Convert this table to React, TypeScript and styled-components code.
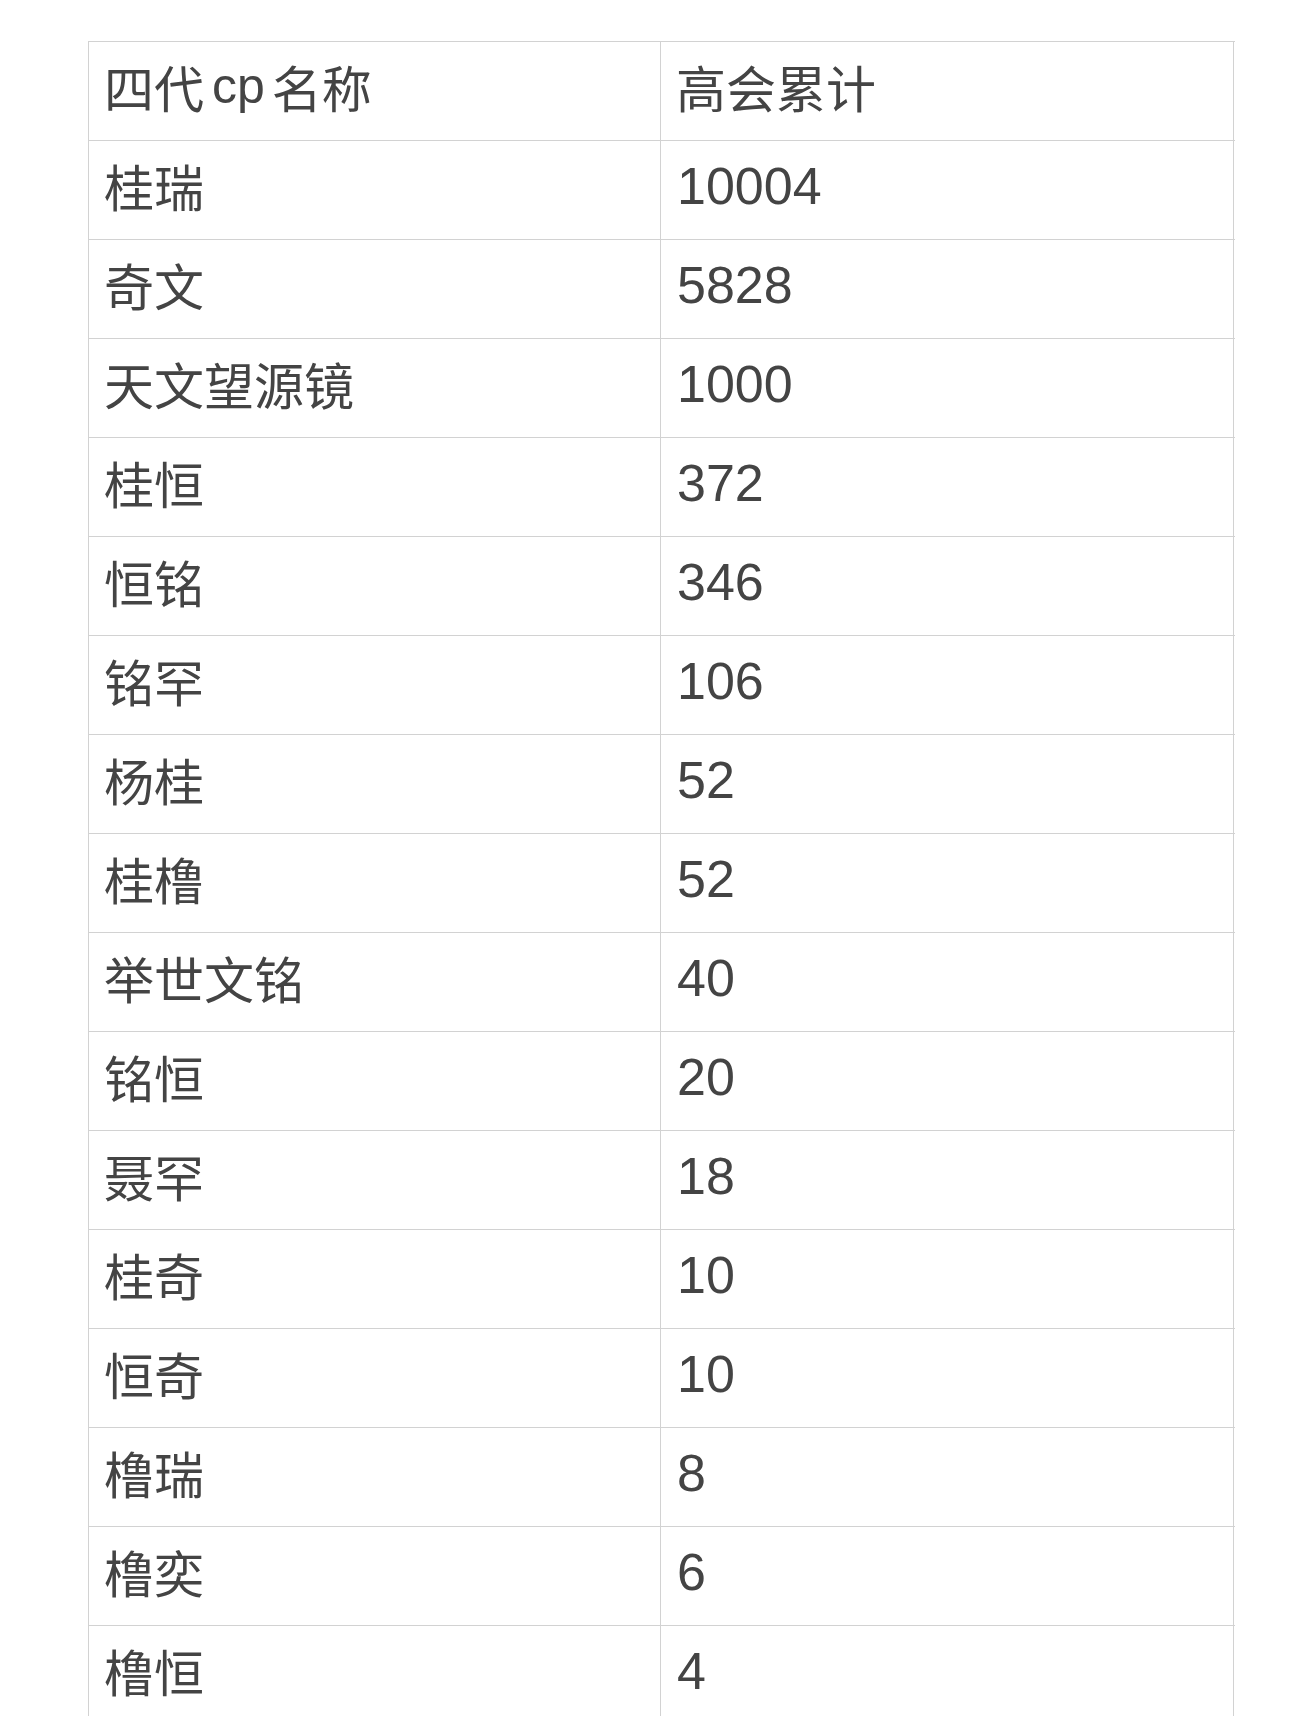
import React from "react";
import styled, { createGlobalStyle } from "styled-components";

const Global = createGlobalStyle`
  html, body { margin: 0; padding: 0; background: #ffffff; }
  body { font-family: "Noto Sans CJK SC", "Noto Sans", sans-serif; }
`;

const Page = styled.div`
  width: 1316px;
  height: 1716px;
  overflow: hidden;
  padding: 41px 0 0 88px;
  box-sizing: border-box;
  background: #ffffff;
`;

const Table = styled.div`
  width: 1146px;
  border-top: 1px solid #d2d2d2;
  border-left: 1px solid #d2d2d2;
  display: flex;
  flex-direction: column;
`;

const Row = styled.div`
  display: grid;
  grid-template-columns: 572px 573px;
  height: 99px;
  box-sizing: border-box;
  border-bottom: 1px solid #d2d2d2;
  flex-shrink: 0;
`;

const Cell = styled.div<{ $num?: boolean }>`
  display: flex;
  align-items: center;
  padding: ${(p) => (p.$num ? "0 0 8px 16px" : "0 0 10px 15px")};
  box-sizing: border-box;
  border-right: 1px solid #d2d2d2;
  color: #444444;
  font-size: ${(p) => (p.$num ? "52px" : "50px")};
  font-family: ${(p) =>
    p.$num
      ? `"Liberation Sans", "Noto Sans CJK SC", sans-serif`
      : `"Noto Sans CJK SC", sans-serif`};
  white-space: pre;
`;

const Latin = styled.span`
  margin: 0 7px 0 8px;
  font-family: "Liberation Sans", sans-serif;
  font-size: 50px;
`;

const rows: [string, string][] = [
  ["桂瑞", "10004"],
  ["奇文", "5828"],
  ["天文望源镜", "1000"],
  ["桂恒", "372"],
  ["恒铭", "346"],
  ["铭罕", "106"],
  ["杨桂", "52"],
  ["桂橹", "52"],
  ["举世文铭", "40"],
  ["铭恒", "20"],
  ["聂罕", "18"],
  ["桂奇", "10"],
  ["恒奇", "10"],
  ["橹瑞", "8"],
  ["橹奕", "6"],
  ["橹恒", "4"],
  ["", ""],
];

export default function App() {
  return (
    <Page>
      <Global />
      <Table>
        <Row>
          <Cell>
            四代<Latin>cp</Latin>名称
          </Cell>
          <Cell>高会累计</Cell>
        </Row>
        {rows.map(([name, count], i) => (
          <Row key={i}>
            <Cell>{name}</Cell>
            <Cell $num>{count}</Cell>
          </Row>
        ))}
      </Table>
    </Page>
  );
}
